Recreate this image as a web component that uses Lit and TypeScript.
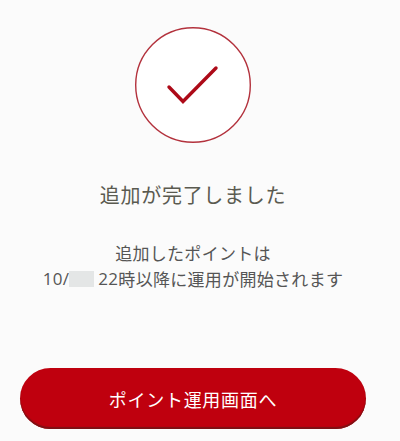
import { LitElement, html, css } from "lit";
import { customElement } from "lit/decorators.js";

@customElement("app-root")
export class AppRoot extends LitElement {
  static styles = css`
    :host {
      display: block;
      width: 400px;
      height: 441px;
      overflow: hidden;
      background: #fbfbfb;
      font-family: "Noto Sans CJK JP", "Open Sans", sans-serif;
      color: #555;
    }
    .page {
      display: flex;
      flex-direction: column;
      align-items: center;
      padding-top: 27px;
    }
    .circle {
      width: 116px;
      height: 116px;
      margin-left: -15px;
      display: block;
    }
    .title {
      margin: 38px 0 0 -14px;
      font-size: 20px;
      font-weight: 400;
      line-height: 28px;
      letter-spacing: 0.7px;
      color: #5a5a50;
    }
    .msg {
      margin: 31px 0 0 -14px;
      font-size: 17px;
      line-height: 26px;
      letter-spacing: 0.3px;
      text-align: center;
      color: #555;
    }
    .line {
      display: flex;
      align-items: center;
      justify-content: center;
    }
    .num {
      font-family: "Open Sans", sans-serif;
      font-size: 17px;
      letter-spacing: 0.3px;
    }
    .mask {
      display: inline-block;
      width: 25px;
      height: 16px;
      margin-right: 4px;
      background: #e4e6e6;
    }
    .btn {
      width: 346px;
      height: 61px;
      margin: 76px 0 0 -14px;
      box-sizing: border-box;
      border: none;
      border-radius: 31px;
      background: #bf000e;
      box-shadow: inset 0 -2px 1px #7c1014;
      color: #fff;
      font-family: inherit;
      font-size: 18px;
      font-weight: 400;
      letter-spacing: 0.7px;
      padding: 0;
    }
  `;

  render() {
    return html`
      <div class="page">
        <svg class="circle" viewBox="0 0 116 116" fill="none">
          <circle cx="58" cy="58" r="57.3" fill="#fff" stroke="#b3323d" stroke-width="1.4" />
          <path d="M34 60 L48 74.5 L81 41" stroke="#ad0a18" stroke-width="3.4" stroke-linecap="round" stroke-linejoin="miter" />
        </svg>
        <h1 class="title">追加が完了しました</h1>
        <div class="msg">
          <div class="line">追加したポイントは</div>
          <div class="line"><span class="num">10/</span><span class="mask"></span><span class="num">22</span>時以降に運用が開始されます</div>
        </div>
        <button class="btn">ポイント運用画面へ</button>
      </div>
    `;
  }
}
